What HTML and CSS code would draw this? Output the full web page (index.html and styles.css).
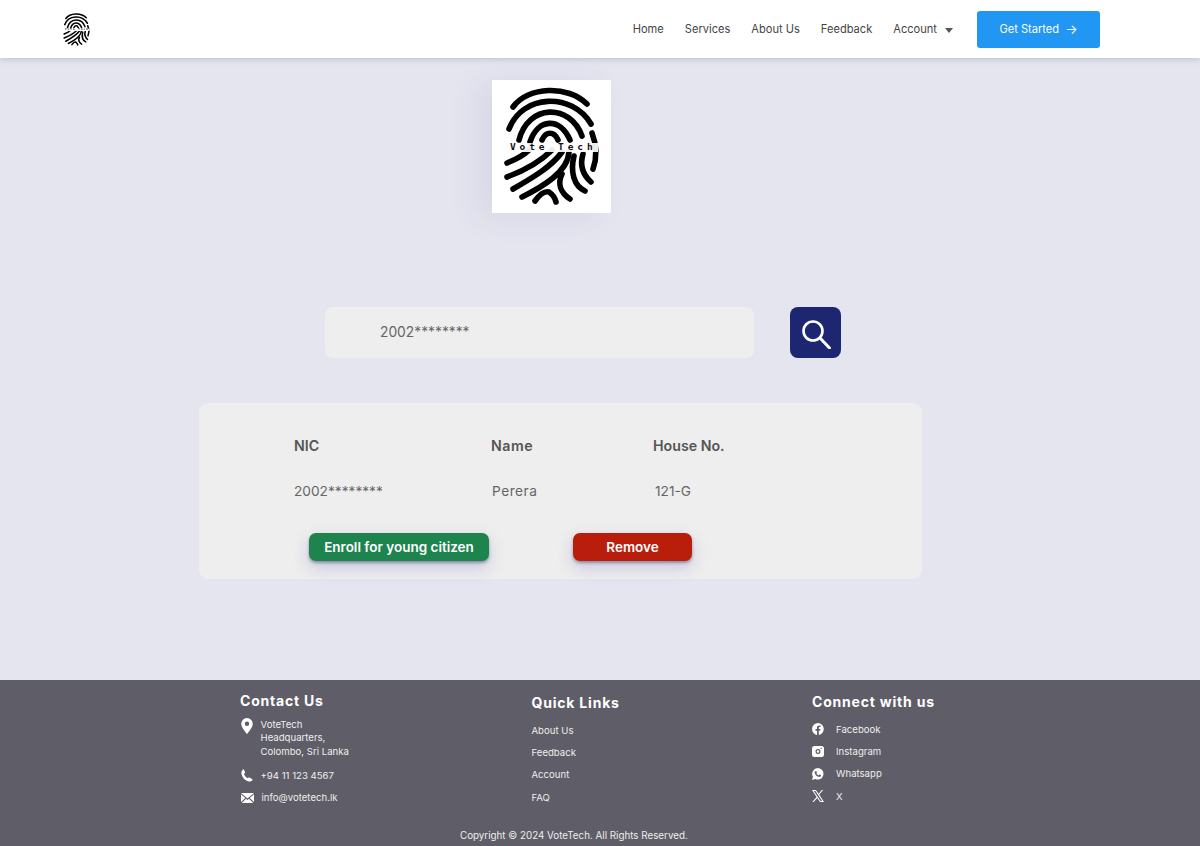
FILE: index.html
```html
<!DOCTYPE html>
<html lang="en">
<head>
    <meta charset="UTF-8">
    <meta name="viewport" content="width=device-width, initial-scale=1.0">
    <title>VoteTech - Young Citizen Search</title>
    <link rel="stylesheet" href="styles.css">
</head>
<body>
    <svg class="defs" width="0" height="0">
        <symbol id="print" viewBox="0 0 119 133">
            <g fill="none" stroke="#000" stroke-width="5.600" stroke-linecap="round">
                <path d="M21 27C36 6 76 5 95 24"/>
                <path d="M17 49C30 14 80 12 99 44"/>
                <path d="M27 60C36 24 78 23 90 56"/>
                <path d="M38 62C46 38 68 37 78 60"/>
                <path d="M50 60C54 51 62 51 66 60"/>
                <path d="M15 83C25 79 32 75 37 70"/>
                <path d="M15 97C34 90 50 80 60 70"/>
                <path d="M21 109C42 97 60 86 70 72"/>
                <path d="M30 117C50 107 76 92 77 72"/>
                <path d="M43 121C48 114 53 111 57 112C60 114 63 118 64 122"/>
                <path d="M100 53C105 66 105 78 101 89"/>
                <path d="M91 74C88 84 90 94 99 102"/>
                <path d="M82 76C78 92 82 106 93 111"/>
                <path d="M70 94C65 104 69 113 78 119"/>
            </g>
        </symbol>
    </svg>

    <header class="topbar">
        <svg class="brand" width="33" height="37" viewBox="0 0 119 133">
            <use href="#print" width="119" height="133"/>
            <rect x="13" y="63" width="93" height="9" fill="#fff" opacity="0.920"/>
            <text class="print-label" x="18" y="70">Vote Tech</text>
        </svg>
        <nav class="menu">
            <a href="#">Home</a>
            <a href="#">Services</a>
            <a href="#">About Us</a>
            <a href="#">Feedback</a>
            <a href="#" class="account">Account <span class="caret"></span></a>
        </nav>
        <a href="#" class="start-btn">Get Started <span class="arrow">→</span></a>
    </header>

    <main class="content">
        <div class="logo-box">
            <svg width="119" height="133" viewBox="0 0 119 133">
                <use href="#print" width="119" height="133"/>
                <rect x="13" y="63" width="93" height="9" fill="#fff" opacity="0.920"/>
                <text class="print-label" x="18" y="70">Vote Tech</text>
            </svg>
        </div>

        <div class="search-row">
            <div class="search-input">2002********</div>
            <button class="search-btn" aria-label="Search">
                <svg width="32" height="32" viewBox="0 0 32 32" fill="none" stroke="#fff" stroke-linecap="round">
                    <circle cx="13" cy="14" r="9.500" stroke-width="2.600"/>
                    <path d="M20.500 21.500l9 9.500" stroke-width="3"/>
                </svg>
            </button>
        </div>

        <section class="result-card">
            <div class="result-grid">
                <div class="col-head">NIC</div>
                <div class="col-head head-name">Name</div>
                <div class="col-head">House No.</div>
                <div class="cell">2002********</div>
                <div class="cell cell-name">Perera</div>
                <div class="cell cell-house">121-G</div>
            </div>
            <div class="actions">
                <button class="action enroll">Enroll for young citizen</button>
                <button class="action remove">Remove</button>
            </div>
        </section>
    </main>

    <footer class="footer">
        <div class="footer-cols">
            <div class="contact">
                <h3>Contact Us</h3>
                <div class="contact-row address">
                    <svg width="12" height="16" viewBox="0 0 12 16"><path fill="#fff" fill-rule="evenodd" d="M6 0a5.8 5.8 0 0 0-5.8 5.8C.2 9.6 6 16 6 16s5.800-6.400 5.800-10.200A5.800 5.800 0 0 0 6 0zm0 8a2.200 2.200 0 1 1 0-4.400A2.200 2.200 0 0 1 6 8z"/></svg>
                    <span>VoteTech<br>Headquarters,<br>Colombo, Sri Lanka</span>
                </div>
                <div class="contact-row phone">
                    <svg width="12" height="13" viewBox="0 0 12 13"><path fill="#fff" d="M2.600.3 4.300 3.500 3 5c.6 1.700 1.800 3.200 3.500 4.200l1.500-1 3.300 2.100c.3.300.2.800-.1 1.100-1 1-2.300 1.500-3.500 1C3.600 11.200 1 8 .4 4.400.2 2.900.8 1.300 2.100.4c.1-.1.300-.2.500-.1z"/></svg>
                    <span>+94 11 123 4567</span>
                </div>
                <div class="contact-row">
                    <svg width="13" height="10" viewBox="0 0 13 10"><path fill="#fff" d="M0 0h13L6.500 5.500zM0 1.300V9l4.300-4.100zM13 1.300V9L8.700 4.900zM.8 10h11.400L8 5.700 6.500 7 5 5.700z"/></svg>
                    <span>info@votetech.lk</span>
                </div>
            </div>

            <div class="links">
                <h3>Quick Links</h3>
                <a href="#">About Us</a>
                <a href="#">Feedback</a>
                <a href="#">Account</a>
                <a href="#">FAQ</a>
            </div>

            <div class="social">
                <h3>Connect with us</h3>
                <a href="#">
                    <svg width="12" height="12" viewBox="0 0 12 12"><path fill="#fff" d="M6 0a6 6 0 0 0-1 11.900V7.700H3.500V6H5V4.700C5 3.200 5.900 2.400 7.200 2.400c.6 0 1.300.1 1.300.1v1.500h-.7c-.8 0-1 .5-1 1V6h1.600l-.3 1.700H6.800v4.200A6 6 0 0 0 6 0z"/></svg>
                    Facebook
                </a>
                <a href="#">
                    <svg width="12" height="11" viewBox="0 0 12 11"><path fill="#fff" fill-rule="evenodd" d="M2.500 0h7A2.500 2.500 0 0 1 12 2.500v6A2.500 2.500 0 0 1 9.500 11h-7A2.500 2.500 0 0 1 0 8.500v-6A2.500 2.500 0 0 1 2.500 0zM6 3a2.500 2.500 0 1 0 0 5 2.500 2.500 0 0 0 0-5zm0 1.200a1.300 1.300 0 1 1 0 2.600 1.300 1.300 0 0 1 0-2.600zM9.200 1.700a.7.700 0 1 0 0 1.400.7.700 0 0 0 0-1.400z"/></svg>
                    Instagram
                </a>
                <a href="#">
                    <svg width="12" height="12" viewBox="0 0 12 12"><path fill="#fff" fill-rule="evenodd" d="M6 0a5.800 5.800 0 0 0-5 8.800L0 12l3.300-.9A5.800 5.800 0 1 0 6 0zM3.900 2.900c.2 0 .4 0 .5.300l.5 1.100c0 .2 0 .3-.1.400l-.5.600c.5 1 1.300 1.700 2.300 2.100l.6-.7c.1-.1.300-.2.400-.1l1.100.5c.2.100.3.200.3.400 0 .8-.8 1.400-1.600 1.400C4.900 8.800 2.800 6.600 2.700 4.500c0-.7.400-1.600 1.200-1.600z"/></svg>
                    Whatsapp
                </a>
                <a href="#">
                    <svg width="12" height="12" viewBox="0 0 12 12"><path fill="#fff" fill-rule="evenodd" d="M0 0h3.900l2.700 3.700L9.800 0h1.400L7.200 4.600 12 12H8.100L5.200 8 1.700 12H.3l4.300-4.900zm1.800 1 6.800 10h1.600L3.400 1z"/></svg>
                    X
                </a>
            </div>
        </div>
        <p class="copyright">Copyright © 2024 VoteTech. All Rights Reserved.</p>
    </footer>
</body>
</html>
```

FILE: styles.css
```css
* {
    box-sizing: border-box;
}
body {
    margin: 0;
    font-family: 'Inter', sans-serif;
    background: #e4e5ef;
    color: #555;
}
.defs {
    position: absolute;
}
.print-label {
    font-family: 'DejaVu Sans Mono', monospace;
    font-size: 9.5px;
    font-weight: bold;
    letter-spacing: 3.900px;
    fill: #111;
}

/* top bar */
.topbar {
    display: flex;
    align-items: center;
    height: 58px;
    padding: 0 100px 0 60px;
    background: #fff;
    box-shadow: 0 1px 6px rgba(90, 100, 130, 0.3);
}
.brand {
    display: block;
}
.menu {
    display: flex;
    align-items: center;
    gap: 21px;
    margin-left: auto;
}
.menu a {
    color: #444;
    font-size: 11.100px;
    text-decoration: none;
}
.account {
    display: flex;
    align-items: center;
    gap: 8px;
}
.caret {
    width: 0;
    height: 0;
    margin-top: 3px;
    border-left: 4px solid transparent;
    border-right: 4px solid transparent;
    border-top: 5px solid #555;
}
.start-btn {
    display: flex;
    align-items: center;
    justify-content: center;
    gap: 6px;
    width: 123px;
    height: 37px;
    margin-left: 24px;
    color: #fff;
    font-size: 11.100px;
    text-decoration: none;
    background: #2196f3;
    border-radius: 3px;
}
.arrow {
    font-size: 13px;
}

/* main */
.content {
    height: 622px;
    padding-top: 22px;
}
.logo-box {
    width: 119px;
    height: 133px;
    margin-left: 492px;
    background: #fff;
    box-shadow: -14px 4px 30px rgba(70, 70, 100, 0.08);
}
.logo-box svg {
    display: block;
}
.search-row {
    display: flex;
    gap: 36px;
    margin: 94px 0 0 325px;
}
.search-input {
    width: 429px;
    height: 51px;
    padding-left: 55px;
    font-size: 13.800px;
    line-height: 51px;
    color: #666;
    background: #eee;
    border-radius: 8px;
}
.search-btn {
    display: flex;
    align-items: center;
    justify-content: center;
    width: 51px;
    height: 51px;
    padding: 0;
    background: #1d2671;
    border: none;
    border-radius: 8px;
}
.result-card {
    width: 723px;
    height: 176px;
    margin: 45px 0 0 199px;
    padding: 34px 0 0 95px;
    background: #eee;
    border-radius: 9px;
}
.result-grid {
    display: grid;
    grid-template-columns: 197px 162px auto;
    row-gap: 27px;
}
.col-head {
    font-size: 14.200px;
    font-weight: 600;
    line-height: 18px;
    color: #555;
}
.head-name {
    letter-spacing: 0.500px;
}
.cell {
    font-size: 13.700px;
    line-height: 18px;
    color: #666;
}
.cell-name {
    padding-left: 1px;
    letter-spacing: 0.500px;
}
.cell-house {
    padding-left: 2px;
}
.actions {
    display: flex;
    gap: 84px;
    margin: 33px 0 0 15px;
}
.action {
    height: 28px;
    padding: 0;
    font-family: inherit;
    font-size: 13.500px;
    font-weight: 600;
    color: #fff;
    border: none;
    border-radius: 7px;
    box-shadow: 0 2px 3px rgba(40, 40, 60, 0.4), 0 7px 16px rgba(90, 90, 190, 0.25);
}
.enroll {
    width: 180px;
    background: #1d844e;
}
.remove {
    width: 119px;
    background: #b81e0b;
}

/* footer */
.footer {
    height: 166px;
    padding-top: 12px;
    color: #eee;
    background: #5f5d67;
}
.footer-cols {
    display: grid;
    grid-template-columns: 291.500px 280.500px auto;
    padding-left: 240px;
}
.footer h3 {
    margin: 0;
    font-size: 14px;
    font-weight: 700;
    line-height: 17px;
    letter-spacing: 0.800px;
    color: #fff;
}
.contact-row {
    display: flex;
    align-items: center;
    gap: 7.500px;
    margin-top: 9px;
    font-size: 9.600px;
    line-height: 13.300px;
}
.contact-row svg {
    flex: none;
    margin-left: 1px;
}
.address {
    align-items: flex-start;
}
.phone {
    margin-top: 11px;
}
.links {
    padding-top: 2px;
}
.links a,
.social a {
    display: flex;
    align-items: center;
    height: 22.400px;
    font-size: 9.600px;
    color: #eee;
    text-decoration: none;
}
.links h3 {
    margin-bottom: 8px;
}
.social {
    padding-top: 1px;
}
.social h3 {
    margin-bottom: 8px;
}
.social a {
    gap: 12px;
}
.copyright {
    margin: 20px 0 0 460px;
    font-size: 9.800px;
    line-height: 14px;
}
```
